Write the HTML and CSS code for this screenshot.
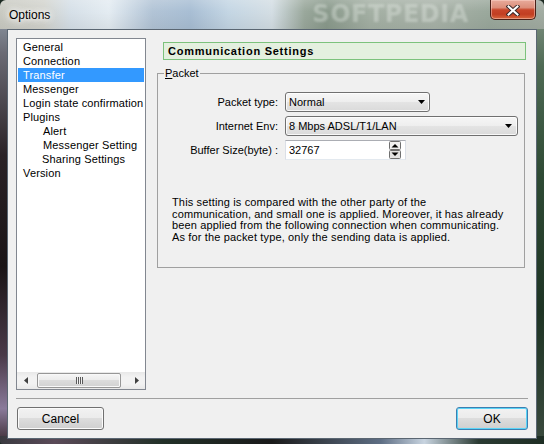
FILE: index.html
```html
<!DOCTYPE html>
<html>
<head>
<meta charset="utf-8">
<title>Options</title>
<link rel="stylesheet" href="styles.css">
</head>
<body>
<div class="window">
  <div class="titlebar">
    <span class="title">Options</span>
    <span class="watermark">SOFTPEDIA</span>
    <button class="close" aria-label="Close">
      <svg width="14" height="11" viewBox="0 0 14 11">
        <path d="M2.5 1.5 L11.5 9.5 M11.5 1.5 L2.5 9.5" stroke="#3a2a2a" stroke-width="4" stroke-linecap="square" fill="none"/>
        <path d="M2.5 1.5 L11.5 9.5 M11.5 1.5 L2.5 9.5" stroke="#ffffff" stroke-width="2" stroke-linecap="square" fill="none"/>
      </svg>
    </button>
  </div>
  <div class="client">
    <div class="main">
      <div class="tree">
        <ul class="items">
          <li>General</li>
          <li>Connection</li>
          <li class="sel">Transfer</li>
          <li>Messenger</li>
          <li>Login state confirmation</li>
          <li>Plugins</li>
          <li class="sub">Alert</li>
          <li class="sub">Messenger Setting</li>
          <li class="sub sub2">Sharing Settings</li>
          <li>Version</li>
        </ul>
        <div class="hscroll">
          <span class="sarrow"><svg width="4" height="7" viewBox="0 0 4 7"><path d="M4 0V7L0 3.5Z" fill="#404040"/></svg></span>
          <span class="track"><span class="thumb"><span class="grip"></span></span></span>
          <span class="sarrow"><svg width="4" height="7" viewBox="0 0 4 7"><path d="M0 0V7L4 3.5Z" fill="#404040"/></svg></span>
        </div>
      </div>
      <div class="panel">
        <div class="header">Communication Settings</div>
        <fieldset class="group">
          <legend><u>P</u>acket</legend>
          <div class="form">
            <label class="lbl">Packet type:</label>
            <div class="combo combo-short"><span>Normal</span><svg width="7" height="4" viewBox="0 0 7 4"><path d="M0 0H7L3.5 4Z" fill="#000"/></svg></div>
            <label class="lbl">Internet Env:</label>
            <div class="combo combo-long"><span>8 Mbps ADSL/T1/LAN</span><svg width="7" height="4" viewBox="0 0 7 4"><path d="M0 0H7L3.5 4Z" fill="#000"/></svg></div>
            <label class="lbl">Buffer Size(byte) :</label>
            <div class="field"><span>32767</span>
              <svg class="spin" width="12" height="18" viewBox="0 0 12 18">
                <rect x="0.5" y="0.5" width="11" height="8" rx="1" fill="#f0f0f0" stroke="#6f6f6f"/>
                <rect x="0.5" y="9.5" width="11" height="8" rx="1" fill="#e2e2e2" stroke="#6f6f6f"/>
                <path d="M2.5 6.5H9.5L6 3Z" fill="#000"/>
                <path d="M2.5 11.5H9.5L6 15Z" fill="#000"/>
              </svg>
            </div>
          </div>
          <p class="desc">This setting is compared with the other party of the<br>communication, and small one is applied. Moreover, it has already<br>been applied from the following connection when communicating.<br>As for the packet type, only the sending data is applied.</p>
        </fieldset>
      </div>
    </div>
    <div class="sep"></div>
    <div class="buttons">
      <button class="btn cancel">Cancel</button>
      <button class="btn ok">OK</button>
    </div>
  </div>
</div>
</body>
</html>
```

FILE: styles.css
```css
* { box-sizing: border-box; }
html, body { margin: 0; padding: 0; }
body {
  width: 544px;
  height: 444px;
  overflow: hidden;
  font-family: "Liberation Sans", Arial, sans-serif;
  font-size: 11px;
  color: #000;
  background: #1c2a22;
}

.window {
  width: 544px;
  height: 444px;
  display: flex;
  flex-direction: column;
  border-radius: 6px 6px 3px 3px;
  overflow: hidden;
  background:
    linear-gradient(180deg, rgba(255,255,255,0.18), rgba(255,255,255,0) 40%, rgba(0,0,0,0.05)) top left / 100% 29px no-repeat,
    linear-gradient(90deg, #c9cac2 0%, #d3d4ce 8%, #d6e0e8 13%, #e4ecf2 20%, #b2c4d6 28%, #a8bed4 35%, #c4d6e4 42%, #d4dee4 50%, #9aa89c 56%, #8a9a8c 60%, #a4b0a4 68%, #a8b2a8 80%, #9aa89c 90%, #a2aca2 100%) top left / 100% 29px no-repeat,
    linear-gradient(90deg, #3a3a40 0%, #5a4a58 10%, #223028 30%, #1a1a1a 50%, #5e6e84 70%, #c8d4e0 78%, #2a3a32 88%, #1e2e24 100%) bottom left / 100% 8px no-repeat,
    linear-gradient(180deg, #9aa8b4 0%, #6a6a74 12%, #2a2226 35%, #1a1416 60%, #4a3a48 80%, #8a7a9a 92%, #3a2a30 100%) top left / 8px 100% no-repeat,
    linear-gradient(180deg, #8a9a8c 0%, #4e6a54 15%, #2e4a34 40%, #1e3424 70%, #3a4a3e 100%) top right / 8px 100% no-repeat;
}

/* Title bar */
.titlebar {
  height: 29px;
  flex-shrink: 0;
  display: flex;
  align-items: flex-start;
}
.title {
  font-size: 12px;
  line-height: 15px;
  margin: 8px 0 0 9px;
  text-shadow: 0 0 5px #fff, 0 0 9px #fff, 0 0 12px rgba(255,255,255,0.8);
}
.watermark {
  margin: 0 0 0 262px;
  white-space: nowrap;
  font-family: "DejaVu Sans", sans-serif;
  font-weight: bold;
  font-size: 24px;
  line-height: 29px;
  letter-spacing: 0.5px;
  color: rgba(235, 240, 235, 0.35);
  filter: blur(1.2px);
}
.close {
  margin-left: auto;
  margin-right: 8px;
  width: 46px;
  height: 20px;
  flex-shrink: 0;
  padding: 0;
  border: 1px solid #4a2018;
  border-top: none;
  border-radius: 0 0 5px 5px;
  background: linear-gradient(180deg, #e8ab9c 0%, #dc8e7a 40%, #c8462a 52%, #c23e22 75%, #d8683e 100%);
  box-shadow: inset 0 0 0 1px rgba(255, 220, 210, 0.45);
  display: flex;
  align-items: center;
  justify-content: center;
}
.close svg { display: block; margin-top: 1px; }

/* Client area */
.client {
  flex: 1;
  margin: 0 7px 7px;
  border: 1px solid #5a6672;
  background: #f0f0f0;
  padding: 8px;
  display: flex;
  flex-direction: column;
}
.main {
  display: flex;
  height: 352px;
  flex-shrink: 0;
}

/* Tree list */
.tree {
  width: 130px;
  height: 352px;
  border: 1px solid #828790;
  background: #fff;
  display: flex;
  flex-direction: column;
}
.items {
  list-style: none;
  margin: 0;
  padding: 1px;
  flex: 1;
  overflow: hidden;
}
.items li {
  height: 14px;
  line-height: 14px;
  padding-left: 5px;
  white-space: nowrap;
  overflow: hidden;
  font-size: 11px;
  letter-spacing: 0.15px;
}
.items li.sel { background: #3399ff; color: #fff; }
.items li.sub { padding-left: 25px; }
.items li.sub2 { padding-left: 24px; }

.hscroll {
  height: 17px;
  display: flex;
  background: linear-gradient(180deg, #e8e8e8, #f2f2f2 30%, #f2f2f2 70%, #e8e8e8);
}
.sarrow {
  width: 17px;
  display: flex;
  align-items: center;
  justify-content: center;
}
.track { flex: 1; display: flex; }
.thumb {
  width: 84px;
  height: 15px;
  margin: 1px 0 0 3px;
  border: 1px solid #979797;
  border-radius: 2px;
  background: linear-gradient(180deg, #f6f6f6, #ebebeb 50%, #dcdcdc 50%, #d2d2d2);
  box-shadow: inset 0 0 0 1px #f8f8f8;
  display: flex;
  align-items: center;
  justify-content: center;
}
.grip {
  width: 7px;
  height: 7px;
  background: repeating-linear-gradient(90deg, #5a5a5a 0 1px, #f0f0f0 1px 2px);
}

/* Right panel */
.panel {
  flex: 1;
  margin-left: 11px;
  display: flex;
  flex-direction: column;
}
.header {
  height: 18px;
  margin: 4px 2px 0 6px;
  border: 1px solid #7cc27c;
  background: #e4f0df;
  font-weight: bold;
  font-size: 11px;
  letter-spacing: 0.75px;
  line-height: 16px;
  padding-left: 4px;
}
.group {
  margin: 7px 3px 0 0;
  padding: 0;
  border: 1px solid #a0a0a0;
  height: 201px;
  min-width: 0;
}
.group legend {
  margin-left: 6px;
  padding: 0 1px;
  line-height: 13px;
  font-size: 11px;
}
.form {
  display: grid;
  grid-template-columns: 120px auto;
  grid-auto-rows: 20px;
  column-gap: 7px;
  row-gap: 4px;
  margin-top: 12px;
  justify-items: start;
}
.lbl {
  justify-self: end;
  align-self: center;
  white-space: nowrap;
  font-size: 11px;
}
.combo {
  height: 20px;
  border: 1px solid #707070;
  border-radius: 3px;
  background: linear-gradient(180deg, #f6f6f6, #eeeeee 50%, #e4e4e4 50%, #dadada);
  box-shadow: inset 0 0 0 1px rgba(255,255,255,0.8);
  display: flex;
  align-items: center;
  justify-content: space-between;
  padding: 0 4px 0 3px;
  font-size: 11px;
}
.combo svg { display: block; }
.combo-short { width: 145px; }
.combo-long { width: 233px; padding-right: 5px; }
.field {
  width: 121px;
  height: 20px;
  background: #fff;
  border: 1px solid #dbdfe6;
  border-top-color: #abadb3;
  border-bottom-color: #e3e9ef;
  display: flex;
  align-items: center;
  padding-left: 3px;
  font-size: 11px;
}
.field .spin { display: block; margin: 0 4px 0 auto; }
.desc {
  margin: 37px 0 0 14px;
  font-size: 11px;
  line-height: 11.6px;
  letter-spacing: 0.15px;
  white-space: nowrap;
}

/* Bottom */
.sep {
  height: 1px;
  background: #a0a0a0;
  margin-top: 8px;
  flex-shrink: 0;
}
.buttons {
  display: flex;
  justify-content: space-between;
  margin-top: 8px;
  padding-left: 1px;
}
.btn {
  height: 23px;
  padding: 0;
  font-family: "Liberation Sans", Arial, sans-serif;
  font-size: 12px;
  color: #000;
  border: 1px solid #707070;
  border-radius: 3px;
  background: linear-gradient(180deg, #f2f2f2, #ebebeb 50%, #dddddd 50%, #cfcfcf);
  box-shadow: inset 0 0 0 1px #fbfbfb;
}
.cancel { width: 87px; }
.ok {
  width: 72px;
  border-color: #3c7fb1;
  box-shadow: inset 0 0 0 1px #5ad4f7;
}
```
